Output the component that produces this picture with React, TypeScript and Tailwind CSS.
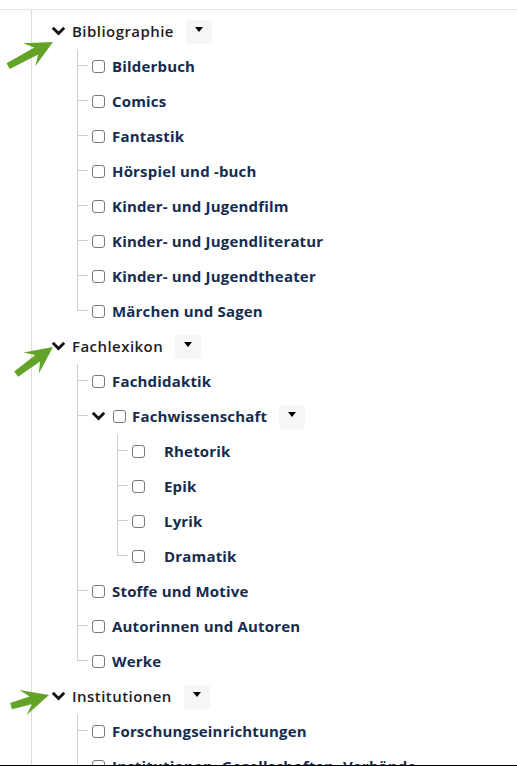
import React from "react";

type Node = { label: string; children?: Node[] };

const TREE: Node[] = [
  {
    label: "Bibliographie",
    children: [
      { label: "Bilderbuch" },
      { label: "Comics" },
      { label: "Fantastik" },
      { label: "Hörspiel und -buch" },
      { label: "Kinder- und Jugendfilm" },
      { label: "Kinder- und Jugendliteratur" },
      { label: "Kinder- und Jugendtheater" },
      { label: "Märchen und Sagen" },
    ],
  },
  {
    label: "Fachlexikon",
    children: [
      { label: "Fachdidaktik" },
      {
        label: "Fachwissenschaft",
        children: [
          { label: "Rhetorik" },
          { label: "Epik" },
          { label: "Lyrik" },
          { label: "Dramatik" },
        ],
      },
      { label: "Stoffe und Motive" },
      { label: "Autorinnen und Autoren" },
      { label: "Werke" },
    ],
  },
  {
    label: "Institutionen",
    children: [
      { label: "Forschungseinrichtungen" },
      { label: "Institutionen, Gesellschaften, Verbände" },
    ],
  },
];

function Chevron() {
  return (
    <svg width="13" height="9" viewBox="0 0 13 9" className="shrink-0">
      <polyline
        points="1.8,1.8 6.5,6.5 11.2,1.8"
        fill="none"
        stroke="#111"
        strokeWidth="2.8"
        strokeLinecap="square"
      />
    </svg>
  );
}

function Checkbox() {
  return (
    <span className="w-[13px] h-[13px] shrink-0 border border-[#787878] rounded-[3px] bg-white" />
  );
}

function DropButton() {
  return (
    <button className="ml-[12px] w-[26px] h-[24px] rounded-[3px] bg-[#f6f6f8] flex items-center justify-center">
      <span className="w-0 h-0 mb-[5px] border-x-[4px] border-x-transparent border-t-[5px] border-t-black" />
    </button>
  );
}

// one child of a list, with its tree connector in front
function Branch({ last, children }: { last: boolean; children: React.ReactNode }) {
  return (
    <li className="flex">
      <div className="w-[11px] shrink-0 flex flex-col">
        <div className="h-[17px] border-l border-b border-[#cfcfcf]" />
        {!last && <div className="flex-1 border-l border-[#cfcfcf]" />}
      </div>
      <div className="flex flex-col">{children}</div>
    </li>
  );
}

function Arrow({ x1, y1, x2, y2 }: { x1: number; y1: number; x2: number; y2: number }) {
  const L = Math.hypot(x2 - x1, y2 - y1);
  const angle = (Math.atan2(y2 - y1, x2 - x1) * 180) / Math.PI;
  const pts = [
    [0, -3],
    [L - 19, -4],
    [L - 27, -13],
    [L, 0],
    [L - 27, 13],
    [L - 19, 4],
    [0, 3.5],
  ]
    .map((p) => p.join(","))
    .join(" ");
  return (
    <polygon
      points={pts}
      fill="#62a328"
      transform={`translate(${x1} ${y1}) rotate(${angle})`}
    />
  );
}

const childText =
  "text-[15px] font-bold tracking-[0.012em] text-[#142c4f] whitespace-nowrap";

export default function App() {
  return (
    <div
      className="relative w-[517px] h-[766px] overflow-hidden bg-white flex flex-col"
      style={{ fontFamily: '"Open Sans", "Noto Sans", sans-serif' }}
    >
      {/* top bar */}
      <div className="h-[10px] shrink-0 border-b border-[#e6e6e6] shadow-[0_1px_3px_rgba(0,0,0,0.04)]" />

      <div className="flex-1 overflow-hidden pl-[31px]">
        <div className="h-full border-l border-[#dcdcdc] pl-[20px] pt-[4px]">
          <ul>
            {TREE.map((top) => (
              <li key={top.label}>
                <div className="h-[35px] flex items-center">
                  <Chevron />
                  <span className="ml-[7px] text-[15px] font-semibold tracking-[0.03em] text-[#1e1e1e]">
                    {top.label}
                  </span>
                  <DropButton />
                </div>
                <ul className="ml-[25px]">
                  {top.children!.map((c, i) => (
                    <Branch key={c.label} last={i === top.children!.length - 1}>
                      {c.children ? (
                        <>
                          <div className="h-[35px] flex items-center">
                            <span className="ml-[4px]">
                              <Chevron />
                            </span>
                            <span className="ml-[8px] flex">
                              <Checkbox />
                            </span>
                            <span className={`ml-[6px] ${childText}`}>{c.label}</span>
                            <DropButton />
                          </div>
                          <ul className="ml-[29px]">
                            {c.children.map((g, j) => (
                              <Branch key={g.label} last={j === c.children!.length - 1}>
                                <div className="h-[35px] flex items-center">
                                  <span className="ml-[4px] flex">
                                    <Checkbox />
                                  </span>
                                  <span className={`ml-[19px] ${childText}`}>{g.label}</span>
                                </div>
                              </Branch>
                            ))}
                          </ul>
                        </>
                      ) : (
                        <div className="h-[35px] flex items-center">
                          <span className="ml-[4px] flex">
                            <Checkbox />
                          </span>
                          <span className={`ml-[7px] ${childText}`}>{c.label}</span>
                        </div>
                      )}
                    </Branch>
                  ))}
                </ul>
              </li>
            ))}
          </ul>
        </div>
      </div>

      <div className="h-px shrink-0 bg-black" />

      {/* annotation arrows */}
      <svg className="absolute inset-0 pointer-events-none" width="517" height="766">
        <Arrow x1={8} y1={66} x2={53} y2={42} />
        <Arrow x1={16} y1={374} x2={53} y2={347} />
        <Arrow x1={11} y1={706} x2={49} y2={695} />
      </svg>
    </div>
  );
}
